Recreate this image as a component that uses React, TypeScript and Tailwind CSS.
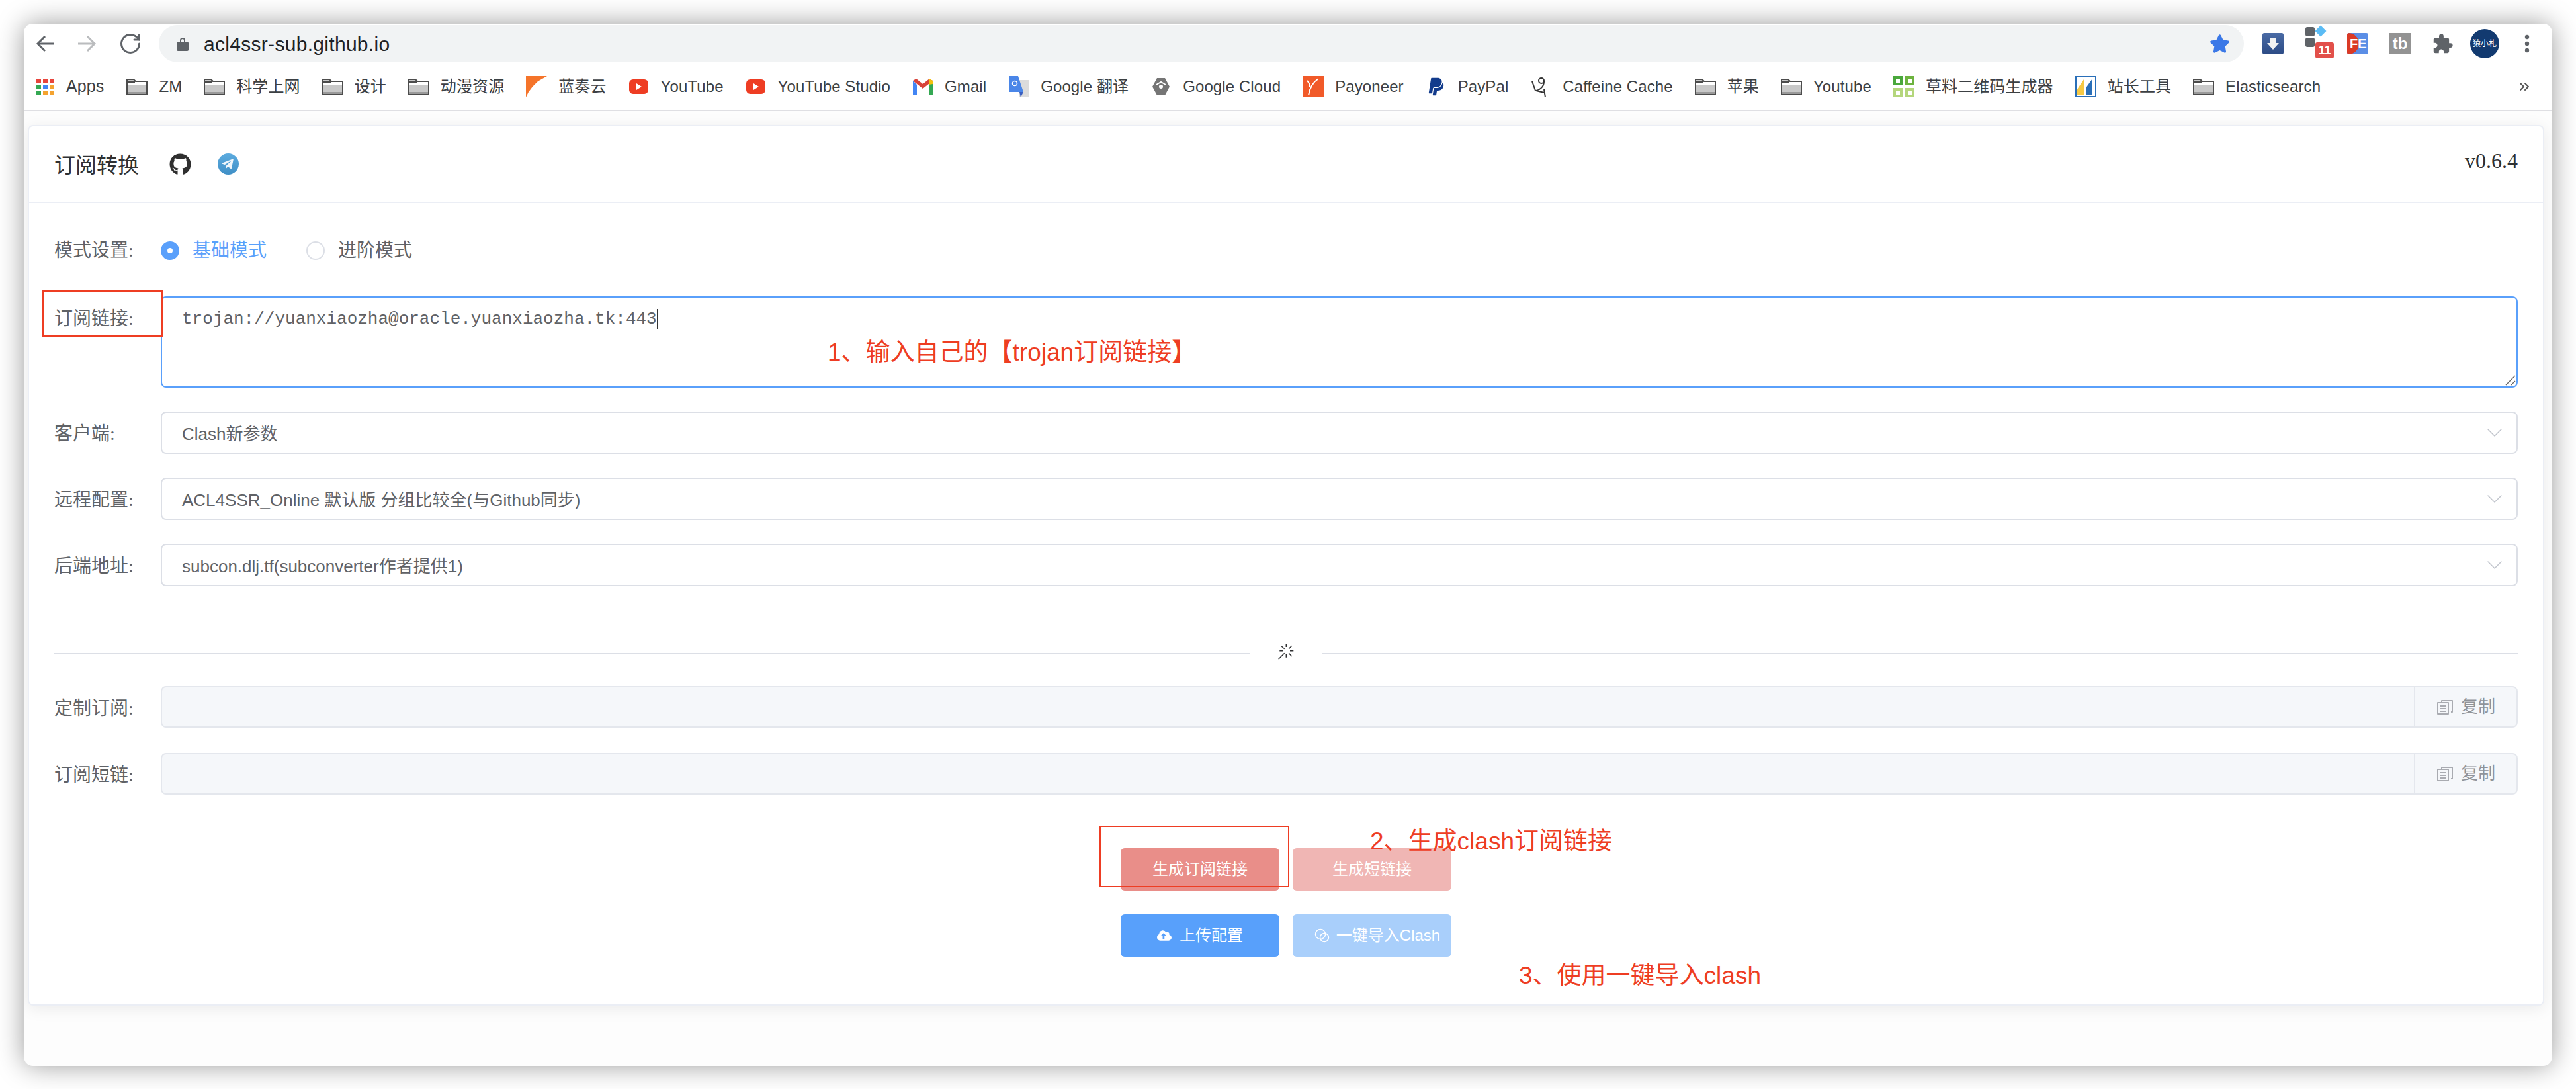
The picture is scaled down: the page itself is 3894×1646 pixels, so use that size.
import { ChevronDown, RotateCw, ChevronsRight } from "lucide-react";
import { FaGithub, FaTelegramPlane, FaPaypal, FaStar, FaCloudUploadAlt } from "react-icons/fa";
import { MdExtension } from "react-icons/md";

const sans = "font-['Liberation_Sans','Noto_Sans_CJK_SC',sans-serif]";

const Folder = () => (
  <svg width="32" height="26" viewBox="0 0 32 26">
    <path d="M1 25V2h10l3 3h17v20z" fill="#c8c8c8" stroke="#4c4c4c" strokeWidth="2" />
    <path d="M2 6h28v4H2z" fill="#fff" />
    <path d="M1 6h12" stroke="#4c4c4c" strokeWidth="2" />
    <path d="M2 21h28v3H2z" fill="#9a9a9a" />
  </svg>
);

const AppsIcon = () => (
  <div className="grid grid-cols-3 gap-[3px] shrink-0 w-[27px]">
    {["#e8453c", "#e8453c", "#e8453c", "#34a853", "#4285f4", "#f4a330", "#34a853", "#f4a330", "#f4a330"].map((c, i) => (
      <span key={i} className="h-[6px]" style={{ background: c }} />
    ))}
  </div>
);

const Lanzou = () => (
  <svg width="32" height="32" viewBox="0 0 32 32">
    <path d="M0 0h32L18 8l-8 8-6 8-4 8z" fill="#f5742a" />
  </svg>
);

const Yt = () => (
  <span className="w-[29px] h-[22px] rounded-[6px] bg-[#ee3d23] flex items-center justify-center">
    <span className="w-0 h-0 border-y-[5px] border-y-transparent border-l-[8px] border-l-white" />
  </span>
);

const Gmail = () => (
  <svg width="30" height="24" viewBox="0 0 30 24">
    <path d="M0 3v21h6V9z" fill="#4285f4" />
    <path d="M24 9v15h6V3z" fill="#34a853" />
    <path d="M0 3l15 12L30 3l-5-3-10 8L5 0z" fill="#d8433a" />
    <path d="M25 0l5 3v5l-6 1z" fill="#f4c20d" />
  </svg>
);

const Translate = () => (
  <svg width="30" height="32" viewBox="0 0 30 32">
    <path d="M14 6h16v26H16z" fill="#dcdcdc" />
    <path d="M0 0h14l8 24H0z" fill="#4a86e8" />
    <path d="M16 24h6l-4 8z" fill="#3a5fc0" />
    <circle cx="9" cy="11" r="3.5" fill="none" stroke="#fff" strokeWidth="1.6" />
  </svg>
);

const GCloud = () => (
  <svg width="26" height="28" viewBox="0 0 26 28">
    <path d="M7 1h12l7 13-7 13H7L0 14z" fill="#757575" />
    <path d="M6 11l7-4 7 4" fill="none" stroke="#fff" strokeWidth="2" />
    <circle cx="13" cy="14" r="3" fill="#fff" />
  </svg>
);

const Payoneer = () => (
  <span className="w-[32px] h-[32px] bg-[#f15a29] flex items-center justify-center">
    <svg width="24" height="28" viewBox="0 0 24 28">
      <path d="M3 5c3 3 4 6 4 9M20 2C12 7 7 15 5 27" fill="none" stroke="#fff" strokeWidth="2" />
    </svg>
  </span>
);

const Caffeine = () => (
  <svg width="28" height="32" viewBox="0 0 28 32">
    <circle cx="15" cy="7" r="4" fill="none" stroke="#333" strokeWidth="2" />
    <path d="M19 8c0 8-6 13-12 14l12 3M1 8l5 14M19 20l2 12" fill="none" stroke="#333" strokeWidth="2" />
  </svg>
);

const Caoliao = () => (
  <svg width="32" height="32" viewBox="0 0 32 32">
    <path d="M0 0h14v14H0z" fill="#4aa83c" />
    <path d="M18 0h14v14H18z" fill="#6db33f" />
    <path d="M0 18h14v14H0zM18 18h14v14H18z" fill="#b4d67c" />
    <path d="M4 4h6v6H4zM22 4h6v6h-6zM4 22h6v6H4zM22 22h6v6h-6z" fill="#fff" />
  </svg>
);

const Zhanzhang = () => (
  <svg width="32" height="32" viewBox="0 0 32 32">
    <rect x="1" y="1" width="30" height="30" fill="#fff" stroke="#2a6fb8" strokeWidth="2" />
    <path d="M3 20 13 5v24H3z" fill="#f6c944" />
    <path d="M16 29V18l10-14v25z" fill="#2a6fb8" />
  </svg>
);

const bookmarks: { icon: React.ReactNode; label: string }[] = [
  { icon: <Folder />, label: "ZM" },
  { icon: <Folder />, label: "科学上网" },
  { icon: <Folder />, label: "设计" },
  { icon: <Folder />, label: "动漫资源" },
  { icon: <Lanzou />, label: "蓝奏云" },
  { icon: <Yt />, label: "YouTube" },
  { icon: <Yt />, label: "YouTube Studio" },
  { icon: <Gmail />, label: "Gmail" },
  { icon: <Translate />, label: "Google 翻译" },
  { icon: <GCloud />, label: "Google Cloud" },
  { icon: <Payoneer />, label: "Payoneer" },
  { icon: <FaPaypal className="w-[24px] h-[30px] text-[#123b8c]" />, label: "PayPal" },
  { icon: <Caffeine />, label: "Caffeine Cache" },
  { icon: <Folder />, label: "苹果" },
  { icon: <Folder />, label: "Youtube" },
  { icon: <Caoliao />, label: "草料二维码生成器" },
  { icon: <Zhanzhang />, label: "站长工具" },
  { icon: <Folder />, label: "Elasticsearch" },
];

const Toolbar = () => (
  <div className="flex items-center h-[58px] pt-[2px] pl-[17px] pr-[34px]">
    <svg width="30" height="26" viewBox="0 0 30 26" fill="none" stroke="#5f6368" strokeWidth="3">
      <path d="M29 13H4M15 2 4 13l11 11" />
    </svg>
    <svg width="30" height="26" viewBox="0 0 30 26" fill="none" stroke="#babcbe" strokeWidth="3" className="ml-[34px]">
      <path d="M1 13h25M15 2l11 11-11 11" />
    </svg>
    <RotateCw size={36} strokeWidth={2} className="ml-[32px] text-[#5f6368]" />
    <div className="flex-1 ml-[25px] h-[56px] rounded-full bg-[#f1f3f4] flex items-center pl-[27px] pr-[21px]">
      <svg width="18" height="22" viewBox="0 0 18 22" fill="#5f6368">
        <path d="M5 9V6a4 4 0 0 1 8 0v3h-2V6a2 2 0 0 0-4 0v3z" />
        <rect x="0" y="8" width="18" height="14" rx="2" />
      </svg>
      <span className="ml-[23px] text-[30px] tracking-[0.3px] text-[#202124]">acl4ssr-sub.github.io</span>
      <FaStar className="ml-auto w-[31px] h-[30px] text-[#3b78e7]" />
    </div>
    <span className="ml-[28px] w-[32px] h-[32px] rounded-[3px] bg-gradient-to-b from-[#4a6ba5] to-[#2c4b85] flex items-center justify-center">
      <svg width="20" height="20" viewBox="0 0 20 20" fill="#f2f2f2"><path d="M6 1h8v8h5L10 19 1 9h5z" /></svg>
    </span>
    <div className="relative ml-[33px] w-[43px] h-[50px] -mt-[6px]">
      <div className="flex flex-col gap-[2px] w-[14px] pt-[3px]">
        <span className="h-[14px] rounded-[3px] bg-[#5f6368]" />
        <span className="h-[14px] rounded-[3px] bg-[#5f6368]" />
      </div>
      <span className="absolute left-[17px] top-[3px] w-[12px] h-[12px] rotate-45 bg-[#5bbcf5]" />
      <span className="absolute right-0 top-[26px] w-[28px] h-[24px] rounded-[3px] bg-[#e2504a] text-white text-[18px] font-bold leading-[24px] text-center">11</span>
    </div>
    <span className="ml-[20px] w-[32px] h-[32px] rounded-[3px] bg-[#5b8ee6] overflow-hidden relative">
      <span className="absolute left-0 top-0 h-full w-[18px] rounded-r-full bg-[#da3a26]" />
      <span className="absolute left-[4px] top-0 text-white text-[20px] font-bold leading-[32px]">FE</span>
    </span>
    <span className="ml-[32px] w-[32px] h-[32px] bg-[#939393] text-white text-[24px] font-bold leading-[32px] text-center">tb</span>
    <MdExtension size={33} className="ml-[32px] text-[#5f6368]" />
    <span className="ml-[25px] w-[44px] h-[44px] rounded-full bg-[#123a70] text-white text-[12px] leading-[44px] text-center">猿小札</span>
    <svg width="8" height="28" viewBox="0 0 8 28" fill="#5f6368" className="ml-[38px]">
      <circle cx="4" cy="4" r="3.2" />
      <circle cx="4" cy="14" r="3.2" />
      <circle cx="4" cy="24" r="3.2" />
    </svg>
  </div>
);

const BookmarkBar = () => (
  <div className="flex items-center h-[74px] pl-[19px] pr-[30px] pt-[2px] border-b-2 border-[#dfdfe3] text-[24px] tracking-[0.1px] text-[#3c4043]">
    <div className="flex items-center gap-[18px] mr-[34px]">
      <AppsIcon />
      <span className="text-[25px]">Apps</span>
    </div>
    <div className="flex items-center gap-[33px]">
      {bookmarks.map((b) => (
        <div key={b.label} className="flex items-center gap-[17px] whitespace-nowrap">
          <span className="w-[32px] flex justify-center">{b.icon}</span>
          <span>{b.label}</span>
        </div>
      ))}
    </div>
    <ChevronsRight size={24} className="ml-auto text-[#555]" />
  </div>
);

const Label = ({ children }: { children: React.ReactNode }) => (
  <label className="w-[161px] shrink-0 h-[64px] leading-[68px] text-[28px] text-[#606266]">{children}</label>
);

const SelectRow = ({ label, value }: { label: string; value: string }) => (
  <div className="flex mb-[36px]">
    <Label>{label}</Label>
    <div className={`flex-1 h-[64px] flex items-center justify-between pl-[30px] pr-[13px] border-2 border-[#dcdfe6] rounded-[8px] text-[26px] text-[#606266] ${sans}`}>
      <span className="translate-y-[2px]">{value}</span>
      <ChevronDown size={40} strokeWidth={0.9} className="text-[#c0c4cc]" />
    </div>
  </div>
);

const CopyRow = ({ label }: { label: string }) => (
  <div className="flex mb-[37px] last:mb-0">
    <Label>{label}</Label>
    <div className="flex-1 h-[63px] flex bg-[#f5f7fa] border-2 border-[#e4e7ed] rounded-[8px]">
      <div className="flex-1" />
      <div className={`w-[155px] flex items-center pl-[33px] gap-[12px] border-l-2 border-[#e4e7ed] text-[26px] text-[#909399] ${sans}`}>
        <svg width="24" height="22" viewBox="0 0 24 22" fill="none" stroke="#909399" strokeWidth="1.5">
          <path d="M7 3V1h16v17h-2" />
          <path d="M1 4h16v17H1zM5 9h8M5 13h8M5 17h8" />
        </svg>
        <span>复制</span>
      </div>
    </div>
  </div>
);

const Btn = ({ className, children }: { className: string; children: React.ReactNode }) => (
  <div className={`w-[240px] h-[64px] rounded-[6px] flex items-center justify-center text-[24px] text-white whitespace-nowrap ${className}`}>
    {children}
  </div>
);

const Note = ({ className, children }: { className: string; children: React.ReactNode }) => (
  <div className={`absolute text-[37px] leading-[44px] text-[#ee3d23] whitespace-nowrap ${sans} ${className}`}>{children}</div>
);

export default function App() {
  return (
    <div className="w-[3894px] h-[1646px] bg-white pt-[36px] pl-[36px] overflow-hidden">
      <div className={`relative w-[3822px] h-[1575px] rounded-[14px] bg-[#fdfdfd] shadow-[0_0_40px_rgba(0,0,0,0.4)] overflow-hidden ${sans}`}>
        <div className="bg-white">
          <Toolbar />
          <BookmarkBar />
        </div>
        <div className="mx-[6px] mt-[21px] w-[3804px] h-[1331px] bg-white border-2 border-[#ebeef5] rounded-[8px] shadow-[0_4px_24px_rgba(0,0,0,0.08)] font-['Liberation_Serif','Noto_Sans_CJK_SC',serif]">
          <div className="flex items-center justify-between h-[116px] px-[38px] border-b-2 border-[#ebeef5]">
            <div className="flex items-center">
              <span className="text-[32px] text-[#303133] translate-y-[2px]">订阅转换</span>
              <FaGithub className="ml-[46px] w-[33px] h-[33px] text-[#2f2f2f]" />
              <span className="ml-[40px] w-[32px] h-[32px] rounded-full bg-gradient-to-b from-[#5cabdf] to-[#3f8fc6] flex items-center justify-center">
                <FaTelegramPlane className="w-[20px] h-[20px] text-[#f0f6fb] -ml-[2px]" />
              </span>
            </div>
            <span className="text-[32px] text-[#303133] -translate-y-[5px]">v0.6.4</span>
          </div>

          <div className="px-[38px] pt-[52px]">
            <div className="flex items-center h-[40px] mb-[49px]">
              <label className="w-[161px] shrink-0 text-[28px] leading-[44px] text-[#606266]">模式设置:</label>
              <span className="w-[28px] h-[28px] rounded-full bg-[#5aa0fb] flex items-center justify-center">
                <span className="w-[8px] h-[8px] rounded-full bg-white" />
              </span>
              <span className="ml-[20px] text-[28px] leading-[44px] text-[#5aa0fb]">基础模式</span>
              <span className="ml-[60px] w-[28px] h-[28px] rounded-full border-2 border-[#dcdfe6]" />
              <span className="ml-[20px] text-[28px] leading-[44px] text-[#606266]">进阶模式</span>
            </div>

            <div className="flex mb-[36px]">
              <Label>订阅链接:</Label>
              <div className="relative flex-1 h-[138px] border-2 border-[#5aa0fb] rounded-[8px] pl-[30px] pt-[14px] font-['Liberation_Mono',monospace] text-[26px] leading-[36px] text-[#606266]">
                trojan://yuanxiaozha@oracle.yuanxiaozha.tk:443
                <span className="inline-block w-[2px] h-[30px] bg-[#333] align-middle" />
                <svg width="16" height="16" viewBox="0 0 16 16" className="absolute right-[1px] bottom-[1px]" stroke="#666" strokeWidth="1.4">
                  <path d="M1 15 15 1M9 15l6-6" />
                </svg>
              </div>
            </div>

            <SelectRow label="客户端:" value="Clash新参数" />
            <SelectRow label="远程配置:" value="ACL4SSR_Online 默认版 分组比较全(与Github同步)" />
            <SelectRow label="后端地址:" value="subcon.dlj.tf(subconverter作者提供1)" />

            <div className="flex items-center justify-center h-[2px] mt-[101px] mb-[48px] bg-[#dcdfe6]">
              <span className="w-[108px] h-[30px] bg-white flex justify-center">
                <svg width="24" height="24" viewBox="0 0 24 24" stroke="#303133" strokeWidth="1.5" fill="none">
                  <path d="M12.3.7V5M12.3 16v4.7M2.3 10.7h5M18 10.7h5.3M5.3 4l4.4 3.7M20.7 3.3l-4.4 4.4M16.3 14.3l4.4 4.7M.7 23.3l9-9" />
                </svg>
              </span>
            </div>

            <CopyRow label="定制订阅:" />
            <CopyRow label="订阅短链:" />

            <div className={`flex flex-col items-center gap-[36px] mt-[80px] ${sans}`}>
              <div className="flex gap-[20px]">
                <Btn className="bg-[#e98e89]">生成订阅链接</Btn>
                <Btn className="bg-[#f0b6b4]">生成短链接</Btn>
              </div>
              <div className="flex gap-[20px]">
                <Btn className="bg-[#58a0fb]">
                  <FaCloudUploadAlt className="w-[22px] h-[22px] mr-[12px]" />
                  上传配置
                </Btn>
                <Btn className="bg-[#a9cffb] pl-[16px]">
                  <svg width="23" height="22" viewBox="0 0 23 22" fill="none" stroke="#fff" strokeWidth="1.5" className="mr-[10px]">
                    <circle cx="9" cy="9" r="7.5" />
                    <circle cx="15" cy="14" r="6.5" />
                  </svg>
                  一键导入Clash
                </Btn>
              </div>
            </div>
          </div>
        </div>

        <div className="absolute left-[28px] top-[403px] w-[182px] h-[70px] border-2 border-[#ee3d23]" />
        <div className="absolute left-[1626px] top-[1212px] w-[287px] h-[93px] border-2 border-[#ee3d23]" />
        <Note className="left-[1215px] top-[475px]">1、输入自己的【trojan订阅链接】</Note>
        <Note className="left-[2035px] top-[1214px]">2、生成clash订阅链接</Note>
        <Note className="left-[2260px] top-[1417px]">3、使用一键导入clash</Note>
      </div>
    </div>
  );
}
